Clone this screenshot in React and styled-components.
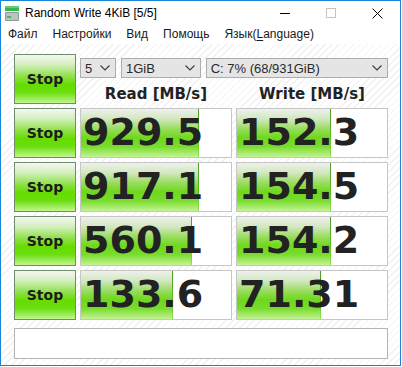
import { Fragment } from 'react';
import styled, { createGlobalStyle } from 'styled-components';

const GlobalStyle = createGlobalStyle`
  html, body {
    margin: 0;
    padding: 0;
    background: #ffffff;
  }
  body {
    width: 402px;
    height: 367px;
    overflow: hidden;
    font-family: "Liberation Sans", Arial, sans-serif;
  }
`;

const Window = styled.div`
  width: 401px;
  height: 366px;
  box-sizing: border-box;
  border: 1px solid #1883d7;
  background: #ffffff;
  display: flex;
  flex-direction: column;
`;

const TitleBar = styled.div`
  height: 24px;
  display: flex;
  align-items: center;
  padding-left: 3px;
  font-size: 12px;
  color: #000;
`;

const Title = styled.span`
  margin-left: 5px;
  flex: 1;
  line-height: 24px;
`;

const CaptionButton = styled.div`
  width: 46px;
  height: 24px;
  display: flex;
  align-items: center;
  justify-content: center;
`;

const MenuBar = styled.div`
  height: 19px;
  display: flex;
  align-items: center;
  gap: 15px;
  padding-left: 7px;
  font-size: 12px;
  color: #1a1a1a;
`;

const MenuItem = styled.span`
  line-height: 19px;
  u {
    text-decoration: underline;
    text-underline-offset: 2px;
  }
`;

const Client = styled.div`
  flex: 1;
  padding: 10px 0 0 13px;
  background-color: #ffffff;
  background-image: repeating-linear-gradient(
    135deg,
    #ffffff 0px,
    #ffffff 4px,
    #f1f1f1 4px,
    #f1f1f1 5px
  );
`;

const Grid = styled.div`
  display: grid;
  grid-template-columns: 62px 152px 152px;
  grid-auto-rows: 50px;
  column-gap: 4px;
  row-gap: 4px;
`;

const StopButton = styled.div`
  box-sizing: border-box;
  border: 1px solid #6f8c6f;
  background: linear-gradient(
    to bottom,
    #f5f7f3 0%,
    #d4efbe 20%,
    #8fe14a 44%,
    #66dc00 62%,
    #6ade10 78%,
    #c2f58e 100%
  );
  display: flex;
  align-items: center;
  justify-content: center;
  font-family: "DejaVu Sans", Verdana, sans-serif;
  font-weight: bold;
  font-size: 14px;
  color: #1c1c1c;
`;

const TopRight = styled.div`
  grid-column: 2 / 4;
  display: flex;
  flex-direction: column;
`;

const ComboRow = styled.div`
  margin-top: 4px;
  display: flex;
  gap: 5px;
`;

const Combo = styled.div`
  box-sizing: border-box;
  width: ${(p) => p.$w}px;
  height: 20px;
  border: 1px solid #adadad;
  background: #e5e5e5;
  display: flex;
  align-items: center;
  justify-content: space-between;
  padding: 0 5px 0 4px;
  font-size: 13px;
  color: #2a2a2a;
`;

const HeaderRow = styled.div`
  margin-top: 7px;
  display: grid;
  grid-template-columns: 152px 152px;
  column-gap: 4px;
`;

const Header = styled.div`
  text-align: center;
  line-height: 18px;
  font-family: "DejaVu Sans", Verdana, sans-serif;
  font-weight: bold;
  font-size: 15px;
  color: #222;
`;

const Result = styled.div`
  box-sizing: border-box;
  border: 1px solid #c6c6c6;
  background-color: #ffffff;
  background-image:
    linear-gradient(to bottom, #4f9a2c, #5cbc22 60%, #8ee050),
    linear-gradient(
      to bottom,
      #eef1ec 0%,
      #d3e8c2 20%,
      #98dc5c 42%,
      #6fd81c 60%,
      #78dc2c 78%,
      #c4f394 100%
    );
  background-repeat: no-repeat;
  background-size: 1px 100%, ${(p) => p.$fill}px 100%;
  background-position: ${(p) => p.$fill - 1}px 0, 0 0;
  padding-left: 2px;
  font-family: "DejaVu Sans", Verdana, sans-serif;
  font-weight: bold;
  font-size: 38px;
  line-height: 46px;
  color: #222;
  overflow: hidden;
  white-space: nowrap;
`;

const Status = styled.div`
  box-sizing: border-box;
  margin-top: 8px;
  width: 374px;
  height: 31px;
  border: 1px solid #b5b5b5;
  background: #ffffff;
`;

const Chevron = () => (
  <svg width="10" height="6" viewBox="0 0 10 6">
    <path d="M0.5 0.5 L5 5 L9.5 0.5" fill="none" stroke="#3a3a3a" strokeWidth="1.1" />
  </svg>
);

const AppIcon = () => (
  <svg width="16" height="16" viewBox="0 0 16 16">
    <rect x="1" y="1" width="14" height="5" fill="#37b64a" />
    <rect x="1" y="1" width="14" height="2" fill="#5fd06a" />
    <rect x="1" y="7" width="14" height="9" rx="1" fill="#8d9a96" />
    <rect x="2" y="8" width="12" height="7" fill="#b9c3c0" />
    <rect x="3" y="11" width="4" height="2" fill="#3fbf4a" />
  </svg>
);

const rows = [
  { read: '929.5', readFill: 118, write: '152.3', writeFill: 94 },
  { read: '917.1', readFill: 118, write: '154.5', writeFill: 94 },
  { read: '560.1', readFill: 111, write: '154.2', writeFill: 94 },
  { read: '133.6', readFill: 92, write: '71.31', writeFill: 84 },
];

export default function App() {
  return (
    <>
      <GlobalStyle />
      <Window>
        <TitleBar>
          <AppIcon />
          <Title>Random Write 4KiB [5/5]</Title>
          <CaptionButton>
            <svg width="10" height="1" viewBox="0 0 10 1">
              <rect width="10" height="1" fill="#000" />
            </svg>
          </CaptionButton>
          <CaptionButton>
            <svg width="10" height="10" viewBox="0 0 10 10">
              <rect x="0.5" y="0.5" width="9" height="9" fill="none" stroke="#c4c4c4" />
            </svg>
          </CaptionButton>
          <CaptionButton>
            <svg width="11" height="11" viewBox="0 0 11 11">
              <path d="M0.5 0.5 L10.5 10.5 M10.5 0.5 L0.5 10.5" stroke="#000" strokeWidth="1" />
            </svg>
          </CaptionButton>
        </TitleBar>
        <MenuBar>
          <MenuItem>Файл</MenuItem>
          <MenuItem>Настройки</MenuItem>
          <MenuItem>Вид</MenuItem>
          <MenuItem>Помощь</MenuItem>
          <MenuItem>
            Язык(<u>L</u>anguage)
          </MenuItem>
        </MenuBar>
        <Client>
          <Grid>
            <StopButton>Stop</StopButton>
            <TopRight>
              <ComboRow>
                <Combo $w={36}>
                  <span>5</span>
                  <Chevron />
                </Combo>
                <Combo $w={80}>
                  <span>1GiB</span>
                  <Chevron />
                </Combo>
                <Combo $w={183}>
                  <span>C: 7% (68/931GiB)</span>
                  <Chevron />
                </Combo>
              </ComboRow>
              <HeaderRow>
                <Header>Read [MB/s]</Header>
                <Header>Write [MB/s]</Header>
              </HeaderRow>
            </TopRight>
            {rows.map((r, i) => (
              <Fragment key={i}>
                <StopButton>Stop</StopButton>
                <Result $fill={r.readFill}>{r.read}</Result>
                <Result $fill={r.writeFill}>{r.write}</Result>
              </Fragment>
            ))}
          </Grid>
          <Status />
        </Client>
      </Window>
    </>
  );
}
